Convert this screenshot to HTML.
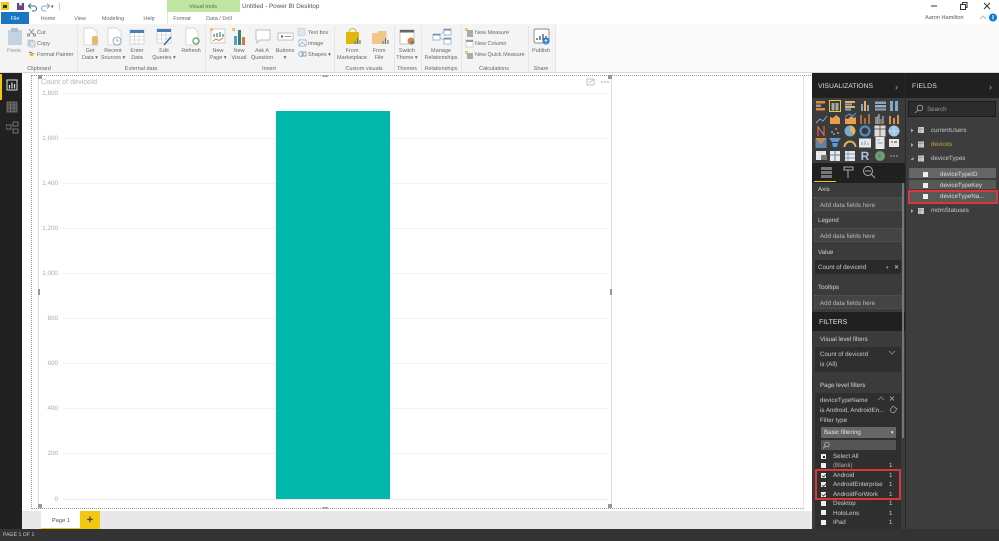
<!DOCTYPE html>
<html><head><meta charset="utf-8"><style>
html,body{margin:0;padding:0;width:999px;height:541px;overflow:hidden;background:#fff}
body{position:relative;font-family:"Liberation Sans",sans-serif;font-size:5.5px;color:#666;text-rendering:geometricPrecision;filter:blur(.3px)}
.a,.t,svg{position:absolute}
.t{white-space:nowrap;line-height:8px}
.p .t{margin-top:.8px}
.c{transform:translateX(-50%);text-align:center}
.g{color:#666}
.w{color:#d0d0d0;font-size:6.2px}
.sep{position:absolute;top:26px;height:46px;width:1px;background:#e6e5e4}
.y{left:38px;color:#aaa;font-size:6.3px;width:20px;text-align:right;margin-top:.5px}
.gl{position:absolute;left:63px;width:546px;height:1px;background:#f2f2f2}
.well{position:absolute;left:814px;width:88px;border:1px dotted #555;background:#444;color:#b8b8b8;box-sizing:border-box;padding:3.500px 0 0 5px;font-size:6.2px;line-height:8px}
.cb{position:absolute;left:821px;width:5px;height:5px;background:#eee}
.f{color:#c8c8c8;font-size:6.2px}
.fd{color:#ddd;font-size:6.2px}
.row{position:absolute;left:909px;width:87px;border-radius:1px}
</style></head><body>

<!-- title bar -->
<div class="a" style="left:1px;top:2px;width:8px;height:8px;background:#f2c811"></div>
<div class="a" style="left:3px;top:5px;width:4px;height:3px;background:#333"></div>
<svg style="left:16px;top:2px" width="40" height="10"><rect x="1" y="1" width="7" height="7" fill="#6b3e8e"/><rect x="3" y="1" width="3" height="2.5" fill="#ddd"/><path d="M13 4h5a2.500 2.500 0 0 1 0 5h-2M15 1.500 12.500 4 15 6.500" fill="none" stroke="#3a6ea5" stroke-width="1.100"/><path d="M33 4h-5a2.500 2.500 0 0 0 0 5h2M31 1.500 33.500 4 31 6.500" fill="none" stroke="#8aa8c5" stroke-width="1.100"/></svg>
<div class="t" style="left:51px;top:3px;color:#444;font-size:5px">▾</div>
<div class="a" style="left:59px;top:3px;width:1px;height:7px;background:#ccc"></div>
<div class="a" style="left:167px;top:0;width:73px;height:12px;background:#bfe6a0"></div>
<div class="t c" style="left:203px;top:2.500px;color:#5d6b4c;font-size:5.5px">Visual tools</div>
<div class="t" style="left:242px;top:2.500px;font-size:6.3px;color:#555">Untitled - Power BI Desktop</div>
<svg style="left:930px;top:1px" width="69" height="10"><path d="M1 5h6" stroke="#333"/><path d="M30.500 3.500h5v5h-5zM32.500 3.500v-2h4.500v5h-1.500" fill="none" stroke="#333"/><path d="M54 2l6 6M60 2l-6 6" stroke="#333" fill="none"/></svg>
<div class="t" style="left:925px;top:13.500px;color:#555;font-size:5.600px">Aaron Hamilton</div>
<svg style="left:979px;top:13px" width="20" height="10"><path d="M1 6l3-3 3 3" fill="none" stroke="#bbb"/><circle cx="14" cy="4.500" r="4" fill="#0b7ad1"/><rect x="13.500" y="2" width="1" height="4.500" fill="#fff"/></svg>

<!-- tabs -->
<div class="a" style="left:1px;top:12px;width:28px;height:12px;background:#1a75c4"></div>
<div class="t c" style="left:15px;top:14.500px;color:#e8f2fb">File</div>
<div class="t c" style="left:48px;top:14.500px">Home</div>
<div class="t c" style="left:80px;top:14.500px">View</div>
<div class="t c" style="left:113px;top:14.500px">Modeling</div>
<div class="t c" style="left:149px;top:14.500px">Help</div>
<div class="a" style="left:167px;top:12px;width:1px;height:12px;background:#e5e5e5"></div>
<div class="t c" style="left:182px;top:14.500px">Format</div>
<div class="t c" style="left:219px;top:14.500px">Data / Drill</div>

<!-- ribbon -->
<div class="a" style="left:0;top:24px;width:999px;height:49px;background:#f4f4f4"></div>
<div class="a" style="left:0;top:72px;width:999px;height:1px;background:#d8d8d8"></div>
<div class="sep" style="left:77px"></div><div class="sep" style="left:205px"></div><div class="sep" style="left:334px"></div><div class="sep" style="left:394px"></div><div class="sep" style="left:421px"></div><div class="sep" style="left:461px"></div><div class="sep" style="left:528px"></div><div class="sep" style="left:555px"></div>
<div class="a" style="left:556px;top:24px;width:443px;height:48px;background:#fafafa"></div>

<svg style="left:0;top:24px" width="560" height="38">
<rect x="8" y="6" width="14" height="15" fill="#c4d3e3"/><rect x="11" y="4" width="7" height="4" fill="#b5c0cb"/>
<path d="M29 5l5 6M34 5l-5 6" stroke="#888" stroke-width=".8" fill="none"/><circle cx="28.500" cy="11" r="1.200" fill="none" stroke="#888" stroke-width=".8"/><circle cx="34.500" cy="11" r="1.200" fill="none" stroke="#888" stroke-width=".8"/>
<rect x="28" y="16" width="5" height="6" fill="#c8d6e4" stroke="#aaa" stroke-width=".5"/><rect x="30" y="17" width="5" height="6" fill="#dbe4ed" stroke="#aaa" stroke-width=".5"/>
<path d="M29 31l3-2.500 3 1-3 3z" fill="#f0b030"/><path d="M29 28l3 1" stroke="#555" stroke-width=".7"/>
<path d="M84 4h9l4 4v13H84z" fill="#fff" stroke="#ccc" stroke-width=".7"/><rect x="92" y="12" width="6" height="9" rx="2" fill="#e9b870"/>
<path d="M108 4h9l4 4v13h-13z" fill="#fff" stroke="#ccc" stroke-width=".7"/><circle cx="117" cy="17" r="4" fill="#fff" stroke="#7d9bb8" stroke-width=".8"/><path d="M117 14.500V17h2" fill="none" stroke="#7d9bb8" stroke-width=".7"/>
<rect x="130" y="6" width="14" height="14" fill="#fff" stroke="#c5c5c5" stroke-width=".7"/><rect x="130" y="6" width="14" height="3" fill="#4a7fb5"/><path d="M130 12.500h14M130 16h14M134.500 9v11M139 9v11" stroke="#c5c5c5" stroke-width=".6"/>
<rect x="157" y="5" width="14" height="14" fill="#fff" stroke="#c5c5c5" stroke-width=".7"/><rect x="157" y="5" width="14" height="3" fill="#4a7fb5"/><path d="M157 11h14M157 15h14M161.500 8v11M166 8v11" stroke="#c5c5c5" stroke-width=".6"/><path d="M164 21l7-8" stroke="#2f6ea8" stroke-width="1.500"/>
<path d="M186 4h8l4 4v13h-12z" fill="#fff" stroke="#ccc" stroke-width=".7"/><circle cx="196" cy="17" r="3" fill="none" stroke="#4c9c5a" stroke-width="1.200"/>
<rect x="211" y="5" width="14" height="14" fill="#fff" stroke="#bbb" stroke-width=".7"/><rect x="210" y="4" width="3" height="3" fill="#efc07a"/><path d="M214 10v3M217 9v4M220 8v5M223 10v3" stroke="#3c8a70" stroke-width="1.200"/><path d="M213 17l3-2 3 1.500 4-2.500" fill="none" stroke="#d9653a" stroke-width=".8"/>
<rect x="232" y="4" width="3" height="3" fill="#efc07a"/><rect x="234" y="12" width="3" height="9" fill="#5a9fc0"/><rect x="238" y="6" width="3" height="15" fill="#3c7f77"/><rect x="242" y="13" width="3" height="8" fill="#d9764a"/>
<path d="M256 6h14v10h-10l-3 3v-3h-1z" fill="#fff" stroke="#aaa" stroke-width=".7"/>
<rect x="278" y="9" width="15" height="7" fill="#fff" stroke="#aaa" stroke-width=".7"/><circle cx="282" cy="12.500" r="1.200" fill="#3478b0"/><path d="M285 12.500h6" stroke="#999"/>
<rect x="298" y="4.500" width="7" height="7" fill="#dfe6ee" stroke="#bbb" stroke-width=".5"/><rect x="299" y="16" width="7" height="6" fill="#fff" stroke="#5f8fbe" stroke-width=".6"/><path d="M300 21l2-3 3 3" fill="none" stroke="#5f8fbe" stroke-width=".6"/><circle cx="301" cy="30" r="2.300" fill="none" stroke="#5f8fbe" stroke-width=".7"/><rect x="302" y="28" width="4" height="4" fill="none" stroke="#5f8fbe" stroke-width=".7"/>
<rect x="346" y="8" width="13" height="12" fill="#e3b60f"/><path d="M349 8a3.500 3.500 0 0 1 7 0" fill="none" stroke="#e3b60f"/><path d="M355 20v-3M357.500 20v-6M360 20v-4" stroke="#3f7fa0" stroke-width="1.100"/>
<path d="M372 20V9h5l1.500-2h8v13z" fill="#f1c68a"/><path d="M383 20v-3M385.500 20v-6M388 20v-4" stroke="#3f7fa0" stroke-width="1.100"/>
<rect x="400" y="6" width="14" height="14" fill="#fff" stroke="#aaa" stroke-width=".7"/><rect x="400" y="6" width="14" height="2.500" fill="#666"/><circle cx="411" cy="17" r="3.500" fill="#e2823e"/><path d="M411 17v3.500a3.500 3.500 0 0 0 3.500-3.500z" fill="#3f8f8c"/>
<rect x="433" y="10" width="7" height="6" fill="#fff" stroke="#6d93b8" stroke-width=".6"/><rect x="433" y="10" width="7" height="1.500" fill="#6d93b8"/><rect x="444" y="5" width="7" height="6" fill="#fff" stroke="#6d93b8" stroke-width=".6"/><rect x="444" y="5" width="7" height="1.500" fill="#6d93b8"/><rect x="444" y="14" width="7" height="6" fill="#fff" stroke="#6d93b8" stroke-width=".6"/><rect x="444" y="14" width="7" height="1.500" fill="#6d93b8"/><path d="M440 11l4-4M440 14l4 2" stroke="#888" stroke-width=".5"/>
<rect x="465" y="4" width="3" height="3" fill="#efc07a"/><rect x="467" y="6" width="6" height="7" fill="#aaa"/><rect x="466" y="16" width="7" height="7" fill="#fff" stroke="#aaa" stroke-width=".5"/><rect x="466" y="16" width="7" height="2" fill="#999"/><rect x="465" y="27" width="3" height="3" fill="#efc07a"/><rect x="467" y="29" width="6" height="6" fill="#aaa"/>
<rect x="534" y="5" width="15" height="14" rx="1.500" fill="#fff" stroke="#666" stroke-width=".7"/><path d="M537 16v-2M540 16v-4M543 16v-6M546 16v-4" stroke="#444" stroke-width="1.200"/><circle cx="546" cy="17" r="3.500" fill="#2b7bc4"/><path d="M546 19.500v-4M544.500 17l1.500-1.500 1.500 1.500" stroke="#fff" stroke-width=".7" fill="none"/>
</svg>

<div class="t c g" style="left:14px;top:46.500px;color:#999">Paste</div>
<div class="t g" style="left:37px;top:28.500px">Cut</div>
<div class="t g" style="left:37px;top:39.500px">Copy</div>
<div class="t g" style="left:37px;top:51px">Format Painter</div>
<div class="t c g" style="left:39px;top:64.500px">Clipboard</div>

<div class="t c g" style="left:90px;top:46.500px">Get</div><div class="t c g" style="left:90px;top:54px">Data ▾</div>
<div class="t c g" style="left:113px;top:46.500px">Recent</div><div class="t c g" style="left:113px;top:54px">Sources ▾</div>
<div class="t c g" style="left:137px;top:46.500px">Enter</div><div class="t c g" style="left:137px;top:54px">Data</div>
<div class="t c g" style="left:164px;top:46.500px">Edit</div><div class="t c g" style="left:164px;top:54px">Queries ▾</div>
<div class="t c g" style="left:191px;top:46.500px">Refresh</div>
<div class="t c g" style="left:141px;top:64.500px">External data</div>

<div class="t c g" style="left:218px;top:46.500px">New</div><div class="t c g" style="left:218px;top:54px">Page ▾</div>
<div class="t c g" style="left:239px;top:46.500px">New</div><div class="t c g" style="left:239px;top:54px">Visual</div>
<div class="t c g" style="left:262px;top:46.500px">Ask A</div><div class="t c g" style="left:262px;top:54px">Question</div>
<div class="t c g" style="left:285px;top:46.500px">Buttons</div><div class="t c g" style="left:285px;top:54px">▾</div>
<div class="t g" style="left:308px;top:28.500px">Text box</div>
<div class="t g" style="left:308px;top:39.500px">Image</div>
<div class="t g" style="left:308px;top:51px">Shapes ▾</div>
<div class="t c g" style="left:269px;top:64.500px">Insert</div>

<div class="t c g" style="left:352px;top:46.500px">From</div><div class="t c g" style="left:352px;top:54px">Marketplace</div>
<div class="t c g" style="left:379px;top:46.500px">From</div><div class="t c g" style="left:379px;top:54px">File</div>
<div class="t c g" style="left:364px;top:64.500px">Custom visuals</div>
<div class="t c g" style="left:407px;top:46.500px">Switch</div><div class="t c g" style="left:407px;top:54px">Theme ▾</div>
<div class="t c g" style="left:407px;top:64.500px">Themes</div>
<div class="t c g" style="left:441px;top:46.500px">Manage</div><div class="t c g" style="left:441px;top:54px">Relationships</div>
<div class="t c g" style="left:441px;top:64.500px">Relationships</div>
<div class="t g" style="left:475px;top:28.500px">New Measure</div>
<div class="t g" style="left:475px;top:39.500px">New Column</div>
<div class="t g" style="left:475px;top:51px">New Quick Measure</div>
<div class="t c g" style="left:494px;top:64.500px">Calculations</div>
<div class="t c g" style="left:541px;top:46.500px">Publish</div>
<div class="t c g" style="left:541px;top:64.500px">Share</div>

<!-- left nav -->
<div class="a" style="left:0;top:73px;width:22px;height:457px;background:#212121"></div>
<div class="a" style="left:0;top:74px;width:2px;height:26px;background:#f2c811"></div>
<svg style="left:6px;top:79px" width="14" height="60"><rect x="1" y="1" width="10" height="10" fill="none" stroke="#ddd"/><path d="M3.500 9.500V6M6 9.500V3.500M8.500 9.500V5" stroke="#ddd" stroke-width="1.200"/><rect x="1" y="23" width="10" height="10" fill="#444" stroke="#888" stroke-width=".7"/><path d="M1 26h10M1 29h10M4.500 23v10M8 23v10" stroke="#888" stroke-width=".6"/><rect x="0" y="46" width="5" height="4" fill="none" stroke="#888" stroke-width=".8"/><rect x="7" y="43" width="5" height="4" fill="none" stroke="#888" stroke-width=".8"/><rect x="7" y="50" width="5" height="4" fill="none" stroke="#888" stroke-width=".8"/></svg>

<!-- canvas -->
<div class="a" style="left:22px;top:73px;width:790px;height:438px;background:#fff"></div>
<div class="a" style="left:803px;top:76px;width:1px;height:435px;background:#e3e3e3"></div>
<div class="a" style="left:31px;top:75px;width:780px;height:0;border-top:1px dotted #999"></div>
<div class="a" style="left:31px;top:508px;width:772px;height:0;border-top:1px dotted #999"></div>
<div class="a" style="left:31px;top:75px;width:0;height:434px;border-left:1px dotted #999"></div>
<div class="a" style="left:38px;top:76px;width:574px;height:431px;border-left:1px solid #ddd;border-right:1px solid #ddd;box-sizing:border-box"></div>
<div class="a" style="left:38px;top:75px;width:4px;height:4px;background:#999"></div>
<div class="a" style="left:608px;top:75px;width:4px;height:4px;background:#999"></div>
<div class="a" style="left:38px;top:504px;width:4px;height:4px;background:#999"></div>
<div class="a" style="left:608px;top:504px;width:4px;height:4px;background:#999"></div>
<div class="a" style="left:322px;top:75px;width:6px;height:2px;background:#aaa"></div>
<div class="a" style="left:322px;top:507px;width:6px;height:2px;background:#aaa"></div>
<div class="a" style="left:38px;top:289px;width:2px;height:6px;background:#999"></div>
<div class="a" style="left:610px;top:289px;width:2px;height:6px;background:#999"></div>
<div class="t" style="left:41px;top:77.500px;font-size:7.200px;color:#b4b4b4">Count of deviceId</div>
<svg style="left:586px;top:78px" width="26" height="10"><rect x="1" y="1" width="7" height="6" fill="none" stroke="#aaa" stroke-width=".7"/><path d="M3 5l4-3" stroke="#aaa" stroke-width=".7"/><circle cx="16" cy="4" r=".7" fill="#888"/><circle cx="19" cy="4" r=".7" fill="#888"/><circle cx="22" cy="4" r=".7" fill="#888"/></svg>

<div class="gl" style="top:93px"></div><div class="gl" style="top:138px"></div><div class="gl" style="top:183px"></div><div class="gl" style="top:228px"></div><div class="gl" style="top:273px"></div><div class="gl" style="top:318px"></div><div class="gl" style="top:363px"></div><div class="gl" style="top:408px"></div><div class="gl" style="top:453px"></div><div class="gl" style="top:499px;background:#e8e8e8"></div>
<div class="t y" style="top:89.500px">1,800</div><div class="t y" style="top:134.500px">1,600</div><div class="t y" style="top:179.500px">1,400</div><div class="t y" style="top:224.500px">1,200</div><div class="t y" style="top:269.500px">1,000</div><div class="t y" style="top:314.500px">800</div><div class="t y" style="top:359.500px">600</div><div class="t y" style="top:404.500px">400</div><div class="t y" style="top:449.500px">200</div><div class="t y" style="top:495.500px">0</div>
<div class="a" style="left:276px;top:111px;width:114px;height:388px;background:#01b8aa"></div>

<!-- tab bar -->
<div class="a" style="left:22px;top:511px;width:790px;height:18px;background:#e8e8e8"></div>
<div class="t" style="left:26px;top:516px;color:#ccc">‹</div><div class="t" style="left:37px;top:516px;color:#ccc">›</div>
<div class="a" style="left:41px;top:511px;width:39px;height:18px;background:#fff;border-bottom:1px solid #f2c811;box-sizing:border-box"></div>
<div class="t c" style="left:61px;top:516.500px;color:#555;font-size:5.800px">Page 1</div>
<div class="a" style="left:80px;top:511px;width:20px;height:18px;background:#f2c811"></div>
<div class="t c" style="left:90px;top:515.500px;color:#444;font-size:11px;font-weight:bold">+</div>
<div class="a" style="left:0;top:529px;width:999px;height:12px;background:#333"></div>
<div class="t" style="left:3px;top:531px;color:#c8c8c8;font-size:5.200px">PAGE 1 OF 1</div>

<div class="p">
<!-- visualizations -->
<div class="a" style="left:812px;top:73px;width:93px;height:456px;background:#3b3b3b"></div>
<div class="a" style="left:812px;top:73px;width:93px;height:25px;background:#202020"></div>
<div class="a" style="left:812px;top:163px;width:93px;height:20px;background:#202020"></div>
<div class="a" style="left:812px;top:312px;width:93px;height:19px;background:#202020"></div>
<div class="t" style="left:818px;top:82px;color:#ddd;font-size:6.800px">VISUALIZATIONS</div>
<div class="t" style="left:895px;top:82px;color:#aaa;font-size:9px">›</div>
<svg style="left:812px;top:98px" width="93" height="66">
<g transform="translate(9 8)"><rect x="-5" y="-5" width="9" height="2.500" fill="#e08a3c"/><rect x="-5" y="-1.500" width="5" height="2.500" fill="#999"/><rect x="-5" y="2" width="9" height="2.500" fill="#e08a3c"/></g>
<g transform="translate(23 8)"><rect x="-5.500" y="-5.500" width="11" height="11" fill="none" stroke="#e8c840"/><rect x="-3.500" y="-3" width="3" height="7.500" fill="#aaa"/><rect x=".5" y="-3" width="3" height="7.500" fill="#aaa"/></g>
<g transform="translate(38 8)"><rect x="-5" y="-5" width="10" height="2" fill="#e8b060"/><rect x="-5" y="-2.500" width="7" height="2" fill="#7fa8c9"/><rect x="-5" y="0" width="10" height="2" fill="#e8b060"/><rect x="-5" y="2.500" width="6" height="2" fill="#7fa8c9"/></g>
<g transform="translate(53 8)"><rect x="-4" y="-2" width="2" height="7" fill="#7fa8c9"/><rect x="-1" y="-5" width="2" height="10" fill="#e8b060"/><rect x="2" y="-1" width="2" height="6" fill="#7fa8c9"/></g>
<g transform="translate(68 8)"><rect x="-5" y="-4.500" width="11" height="2.500" fill="#7fa8c9"/><rect x="-5" y="-1" width="11" height="2.500" fill="#aaa"/><rect x="-5" y="2.500" width="11" height="2" fill="#7fa8c9"/></g>
<g transform="translate(82 8)"><rect x="-4" y="-5" width="3" height="10" fill="#7fa8c9"/><rect x="1" y="-5" width="3" height="10" fill="#7fa8c9"/></g>

<g transform="translate(9 21)"><path d="M-5 4l4-4 3 2 4-5" fill="none" stroke="#7fa8c9"/></g>
<g transform="translate(23 21)"><path d="M-5 5v-7l3 1 3-3 4 3v6z" fill="#e8a050"/></g>
<g transform="translate(38 21)"><path d="M-5 5v-6l3 1 3-3 3 2 2-1v7z" fill="#e8a050"/><path d="M-5-2l4-3 4 2 3-3" stroke="#5b9bd5" fill="none"/></g>
<g transform="translate(53 21)"><path d="M-4 5v-9M0 5v-6M4 5v-10" stroke="#d47a3a" stroke-width="1.500"/></g>
<g transform="translate(68 21)"><path d="M-4 5v-7M-1 5v-10M3 5v-8" stroke="#7fa8c9" stroke-width="1.500"/><path d="M-2.500 5v-8M1 5v-5" stroke="#e08a3c" stroke-width="1.200"/></g>
<g transform="translate(82 21)"><path d="M-4 5v-8M0 5v-6M4 5v-9" stroke="#d89050" stroke-width="2"/></g>

<g transform="translate(9 33)"><path d="M-3-5V5M3-5V5" stroke="#b04a3a" stroke-width="2"/><path d="M-3-4l6 8" stroke="#999"/></g>
<g transform="translate(23 33)"><circle cx="-3" cy="1" r="1" fill="#7fa8c9"/><circle cx="1" cy="-2" r="1" fill="#e08a3c"/><circle cx="-1" cy="3" r="1" fill="#7fa8c9"/><circle cx="3" cy="2" r="1" fill="#aaa"/></g>
<g transform="translate(38 33)"><circle r="5.500" fill="#7fa8c9"/><path d="M0 0v-5.500a5.500 5.500 0 0 1 4 9z" fill="#e8b060"/></g>
<g transform="translate(53 33)"><circle r="4.500" fill="none" stroke="#4b91c9" stroke-width="2.200"/></g>
<g transform="translate(68 33)"><rect x="-5.500" y="-5.500" width="11" height="11" fill="#ddd"/><path d="M-5.500-2h11M0-5.500v11" stroke="#666"/></g>
<g transform="translate(82 33)"><circle r="5.500" fill="#9cc4e4"/><path d="M-5.500 0h11M0-5.500v11" stroke="#eee" stroke-width=".5"/></g>

<g transform="translate(9 45)"><rect x="-5.500" y="-5" width="11" height="10" fill="#5b86aa"/><path d="M-5.500-5l5 6 6-6" fill="#d08840"/></g>
<g transform="translate(23 45)"><path d="M-6-5H6L3-1h-6zM-3 0h6l-1 4h-4z" fill="#5b9bd5"/></g>
<g transform="translate(38 45)"><path d="M-5.500 4a5.500 5.500 0 0 1 11 0" fill="none" stroke="#dcb060" stroke-width="2"/></g>
<g transform="translate(53 45)"><rect x="-6" y="-4.500" width="12" height="9" fill="#e8e8e8"/><path d="M-3 2v-3M0 2v-4M3 2v-2" stroke="#5b9bd5"/></g>
<g transform="translate(68 45)"><rect x="-4.500" y="-6" width="9" height="12" fill="#e8e8e8"/><path d="M-2.500-3h2M-2.500 0h5" stroke="#5b9bd5"/></g>
<g transform="translate(82 45)"><rect x="-5" y="-4" width="10" height="8" fill="#e8e8e8"/><rect x="-3" y="-2" width="2" height="2" fill="#c94"/><rect x="0" y="-2" width="3" height="2" fill="#5a9"/></g>

<g transform="translate(9 58)"><rect x="-5" y="-5" width="10" height="9" fill="#e8e8e8"/><rect x="0" y="-1" width="6" height="5" fill="#777"/></g>
<g transform="translate(23 58)"><rect x="-5" y="-5" width="10" height="10" fill="#e8e8e8"/><path d="M-5-1h10M0-5V5" stroke="#5b86aa"/></g>
<g transform="translate(38 58)"><rect x="-5" y="-5" width="10" height="10" fill="#e8e8e8"/><path d="M-5-2h10M-2-5V5M-5 2h10" stroke="#5b86aa" stroke-width=".7"/></g>
<g transform="translate(68 58)"><circle r="5" fill="#6f9f6f"/><path d="M-3-3l4 2-1 4z" fill="#4f7fb0"/></g>
<g transform="translate(82 58)"><circle cx="-3" r=".8" fill="#aaa"/><circle r=".8" fill="#aaa"/><circle cx="3" r=".8" fill="#aaa"/></g>
</svg>
<div class="t c" style="left:865px;top:150.500px;color:#aac4dd;font-size:12px;line-height:11px;font-weight:bold">R</div>
<svg style="left:812px;top:163px" width="93" height="20"><path d="M9 4h11v3H9zM9 8h11v3H9zM9 12h11v3H9z" fill="#777"/><path d="M32 4h9v3h-9zM36 7v8" stroke="#aaa" fill="none"/><circle cx="56" cy="8" r="4.500" fill="none" stroke="#aaa"/><path d="M59 11l4 4M53 8h6" stroke="#aaa"/></svg>
<div class="a" style="left:814px;top:181px;width:22px;height:1px;background:#f2c811"></div>
<div class="a" style="left:902px;top:183px;width:2px;height:255px;background:#777"></div>

<div class="t w" style="left:818px;top:185.500px">Axis</div>
<div class="well" style="top:197px;height:14px">Add data fields here</div>
<div class="t w" style="left:818px;top:216.500px">Legend</div>
<div class="well" style="top:228px;height:14px">Add data fields here</div>
<div class="t w" style="left:818px;top:248px">Value</div>
<div class="a" style="left:815px;top:260px;width:86px;height:14px;background:#2a2a2a;border-radius:1px"></div>
<div class="t" style="left:818px;top:263px;color:#ccc;font-size:6.200px">Count of deviceId</div>
<div class="t" style="left:886px;top:263px;color:#999;font-size:5px">▾</div>
<div class="t" style="left:894px;top:263px;color:#ddd;font-size:6px">✕</div>
<div class="t w" style="left:818px;top:283.500px">Tooltips</div>
<div class="well" style="top:295px;height:14px">Add data fields here</div>
<div class="t" style="left:819px;top:318px;color:#e4e4e4;font-size:7px">FILTERS</div>
<div class="t w" style="left:820px;top:335px">Visual level filters</div>
<div class="a" style="left:815px;top:347px;width:86px;height:25px;background:#2f2f2f;border-radius:2px"></div>
<div class="t f" style="left:820px;top:350px">Count of deviceId</div>
<svg style="left:888px;top:350px" width="10" height="6"><path d="M1 1l3 3 3-3" fill="none" stroke="#999" stroke-width=".7"/></svg>
<div class="t f" style="left:820px;top:360px">is (All)</div>
<div class="t w" style="left:820px;top:381px">Page level filters</div>
<div class="a" style="left:815px;top:393px;width:86px;height:136px;background:#2f2f2f;border-radius:2px"></div>
<div class="t f" style="left:820px;top:396px">deviceTypeName</div>
<svg style="left:877px;top:395px" width="24" height="6"><path d="M1 5l3-3 3 3" fill="none" stroke="#999" stroke-width=".7"/><path d="M13 1.500l4 4M17 1.500l-4 4" stroke="#bbb" stroke-width=".7"/></svg>
<div class="t f" style="left:820px;top:406px">is Android, AndroidEn...</div>
<svg style="left:889px;top:405px" width="10" height="9"><path d="M4 1l4 3-3 4-3-1-1-2z" fill="none" stroke="#aaa" stroke-width=".7"/></svg>
<div class="t f" style="left:820px;top:416px">Filter type</div>
<div class="a" style="left:821px;top:427px;width:75px;height:11px;background:#666"></div>
<div class="t" style="left:824px;top:428.500px;color:#e0e0e0;font-size:6.200px">Basic filtering</div>
<div class="t" style="left:890px;top:428.500px;color:#eee;font-size:4.500px">▼</div>
<div class="a" style="left:821px;top:440px;width:75px;height:10px;background:#555"></div>
<svg style="left:822px;top:441px" width="9" height="9"><circle cx="5" cy="3.500" r="2.300" fill="none" stroke="#ccc" stroke-width=".7"/><path d="M3.300 5.300 1 7.500" stroke="#ccc" stroke-width=".7"/></svg>

<div class="cb" style="top:454px"></div><div class="a" style="left:823px;top:456px;width:2px;height:2px;background:#222"></div>
<div class="cb" style="top:463px"></div>
<div class="cb" style="top:473px"></div><div class="cb" style="top:482px"></div><div class="cb" style="top:492px"></div><div class="cb" style="top:501px"></div><div class="cb" style="top:510px"></div><div class="cb" style="top:520px"></div>
<svg style="left:821px;top:473px" width="6" height="25"><path d="M1 2.500l1.500 1.500 3-3M1 12l1.500 1.500 3-3M1 21.500l1.500 1.500 3-3" stroke="#222" fill="none" stroke-width=".8"/></svg>
<div class="t f" style="left:833px;top:452.500px">Select All</div>
<div class="t" style="left:833px;top:461.500px;color:#aaa;font-size:6.200px">(Blank)</div>
<div class="t f" style="left:833px;top:471px">Android</div>
<div class="t f" style="left:833px;top:480.500px">AndroidEnterprise</div>
<div class="t f" style="left:833px;top:490px">AndroidForWork</div>
<div class="t f" style="left:833px;top:499px">Desktop</div>
<div class="t f" style="left:833px;top:509px">HoloLens</div>
<div class="t f" style="left:833px;top:518px">IPad</div>
<div class="t f" style="left:889px;top:461.500px">1</div><div class="t f" style="left:889px;top:471px">1</div><div class="t f" style="left:889px;top:480.500px">1</div><div class="t f" style="left:889px;top:490px">1</div><div class="t f" style="left:889px;top:499px">1</div><div class="t f" style="left:889px;top:509px">1</div><div class="t f" style="left:889px;top:518px">1</div>
<div class="a" style="left:815px;top:469px;width:86px;height:31px;border:2px solid #d9363e;box-sizing:border-box"></div>

<!-- fields -->
<div class="a" style="left:905px;top:73px;width:1px;height:456px;background:#2a2a2a"></div>
<div class="a" style="left:906px;top:73px;width:93px;height:456px;background:#3d3d3d"></div>
<div class="a" style="left:906px;top:73px;width:93px;height:25px;background:#202020"></div>
<div class="t" style="left:912px;top:82px;color:#ddd;font-size:6.800px;letter-spacing:.2px">FIELDS</div>
<div class="t" style="left:989px;top:82px;color:#aaa;font-size:9px">›</div>
<div class="a" style="left:908px;top:101px;width:88px;height:16px;background:#2c2c2c;border:1px solid #1c1c1c;box-sizing:border-box"></div>
<svg style="left:914px;top:104px" width="10" height="10"><circle cx="6" cy="4" r="2.800" fill="none" stroke="#aaa" stroke-width=".8"/><path d="M4 6 1 9" stroke="#aaa" stroke-width=".8"/></svg>
<div class="t" style="left:927px;top:105px;color:#999;font-size:6.200px">Search</div>

<svg style="left:909px;top:127px" width="22" height="90">
<path d="M2 1.500l2.500 2L2 5.500zM2 16l2.500 2L2 20z" fill="#aaa"/><path d="M4.500 30v3h-3z" fill="#aaa"/><path d="M2 82l2.500 2L2 86z" fill="#aaa"/>
<g fill="#ccc"><rect x="9" y="0" width="6" height="6"/><rect x="9" y="14.500" width="6" height="6"/><rect x="9" y="28.500" width="6" height="6"/><rect x="9" y="81" width="6" height="6"/></g>
<g stroke="#777" stroke-width=".5"><path d="M9 2h6M11 0v6M9 16.500h6M11 14.500v6M9 30.500h6M11 28.500v6M9 83h6M11 81v6"/></g>
</svg>
<div class="t" style="left:931px;top:126px;color:#c8c8c8;font-size:6.200px">currentUsers</div>
<div class="t" style="left:931px;top:140.500px;color:#c9a73b;font-size:6.200px">devices</div>
<div class="t" style="left:931px;top:154.500px;color:#c8c8c8;font-size:6.200px">deviceTypes</div>
<div class="row" style="top:168px;height:10px;background:#666"></div>
<div class="row" style="top:180px;height:9px;background:#585858"></div>
<div class="row" style="top:191px;height:11px;background:#585858"></div>
<div class="a" style="left:923px;top:172px;width:5px;height:5px;background:#eee"></div>
<div class="a" style="left:923px;top:183px;width:5px;height:5px;background:#eee"></div>
<div class="a" style="left:923px;top:194px;width:5px;height:5px;background:#eee"></div>
<div class="t fd" style="left:940px;top:170.500px">deviceTypeID</div>
<div class="t fd" style="left:940px;top:181.500px">deviceTypeKey</div>
<div class="t fd" style="left:940px;top:192.500px">deviceTypeNa...</div>
<div class="a" style="left:908px;top:190px;width:90px;height:14px;border:2px solid #d9363e;box-sizing:border-box"></div>
<div class="t" style="left:931px;top:206.500px;color:#c8c8c8;font-size:6.200px">mdmStatuses</div>
</div>

</body></html>
